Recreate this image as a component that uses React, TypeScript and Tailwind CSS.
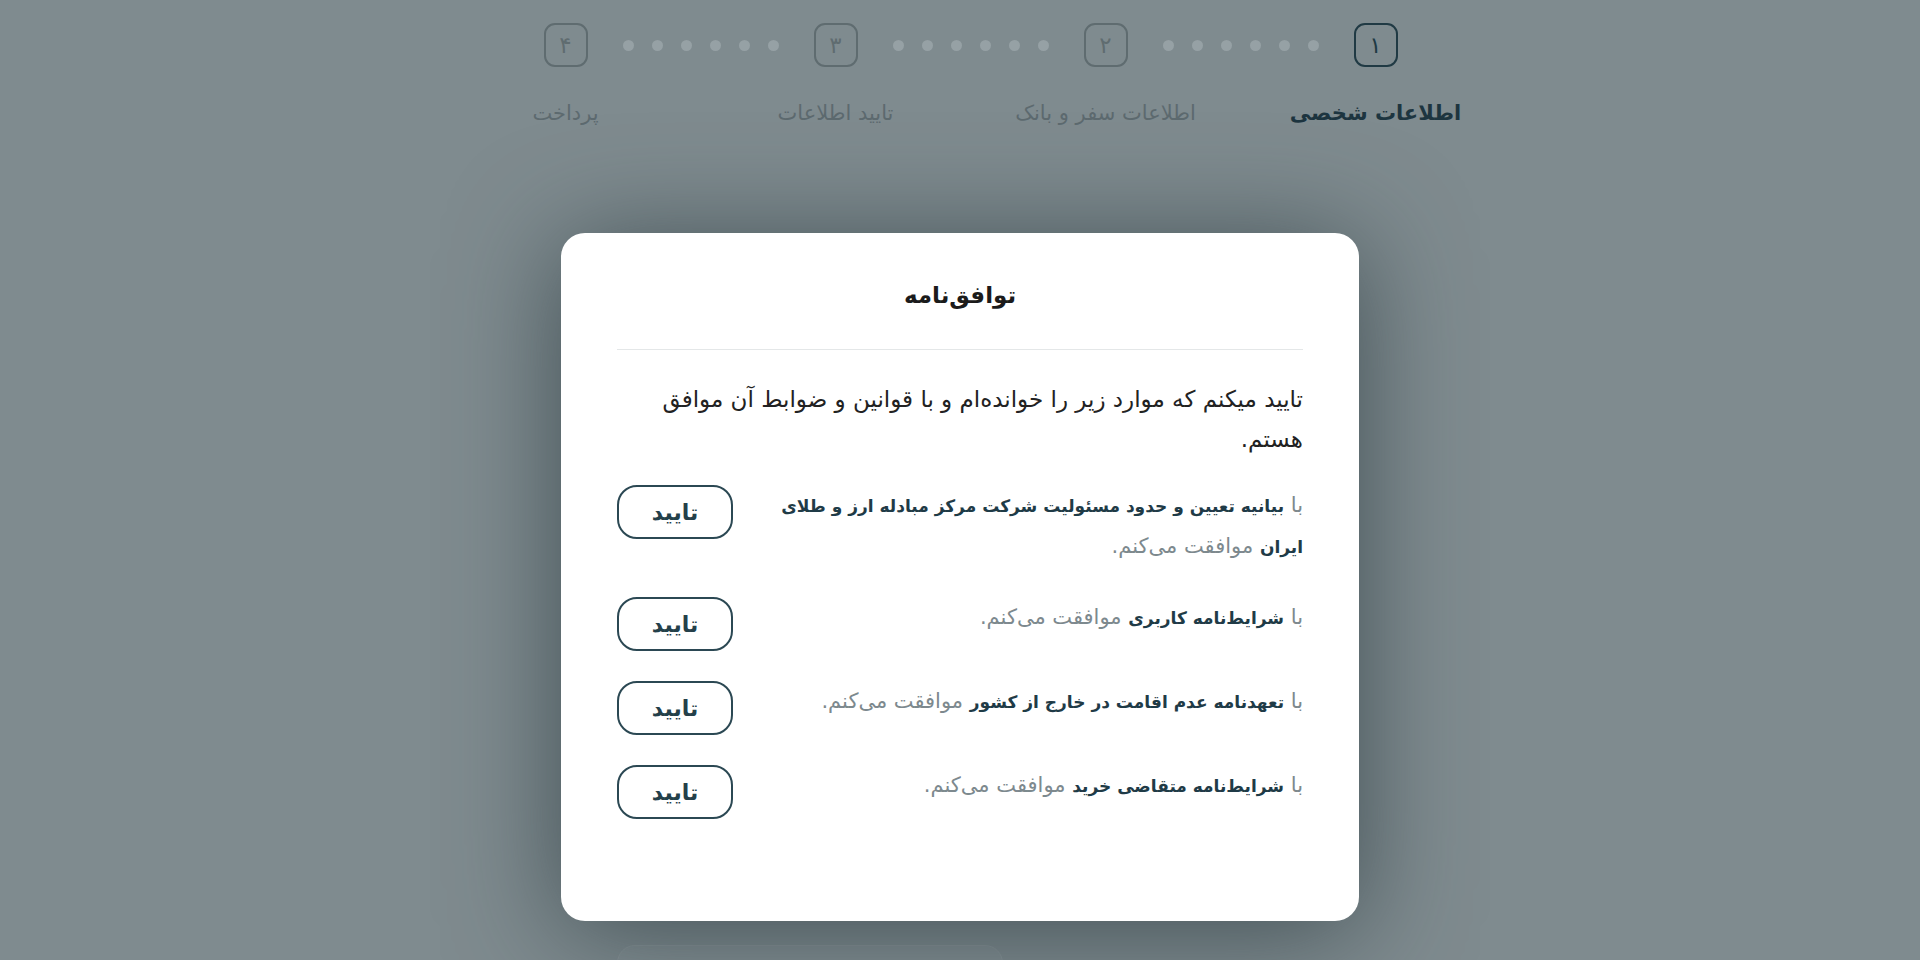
import React from "react";

const steps = [
  { num: "۱", label: "اطلاعات شخصی", active: true },
  { num: "۲", label: "اطلاعات سفر و بانک", active: false },
  { num: "۳", label: "تایید اطلاعات", active: false },
  { num: "۴", label: "پرداخت", active: false },
];

const agreements = [
  { bold: "بیانیه تعیین و حدود مسئولیت شرکت مرکز مبادله ارز و طلای ایران" },
  { bold: "شرایط‌نامه کاربری" },
  { bold: "تعهدنامه عدم اقامت در خارج از کشور" },
  { bold: "شرایط‌نامه متقاضی خرید" },
];

function Dots() {
  return (
    <div className="flex h-[44px] items-center gap-[18px] mx-[35px]">
      {Array.from({ length: 6 }).map((_, i) => (
        <span key={i} className="block h-[11px] w-[11px] rounded-full bg-[#96a1a5]" />
      ))}
    </div>
  );
}

function Stepper() {
  return (
    <div className="flex justify-center pt-[23px] pl-[21px]">
      <div className="flex items-start" dir="rtl">
        {steps.map((s, i) => (
          <React.Fragment key={s.num}>
            <div className="flex w-[44px] flex-col items-center">
              <div
                className={`flex h-[44px] w-[44px] items-center justify-center rounded-[11px] border-2 text-[23px] ${
                  s.active ? "border-[#203a44] text-[#203a44]" : "border-[#5f6c70] text-[#5f6c70]"
                }`}
              >
                {s.num}
              </div>
              <div
                className={`mt-[31px] whitespace-nowrap text-[21px] leading-[30px] ${
                  s.active ? "font-bold text-[#1d3540]" : "text-[#5d6a6f]"
                }`}
              >
                {s.label}
              </div>
            </div>
            {i < steps.length - 1 && <Dots />}
          </React.Fragment>
        ))}
      </div>
    </div>
  );
}

export default function App() {
  return (
    <div
      dir="rtl"
      className="relative h-[960px] w-full overflow-hidden bg-[#7f8b8f] font-['DejaVu_Sans',sans-serif]"
    >
      {/* Page behind the overlay */}
      <Stepper />
      <div className="mx-auto mt-[817px] flex w-[686px] justify-end">
        <div className="h-[60px] w-[386px] rounded-[18px] border border-[#8a9599] bg-[#838f93]" />
      </div>

      {/* Agreement modal */}
      <div className="absolute inset-0 flex justify-center pt-[233px]">
        <div className="h-[688px] w-[798px] rounded-[24px] bg-white px-[56px] pt-[46px] shadow-[0_10px_110px_rgba(45,60,66,0.75)]">
          <h2 className="text-center text-[23px] font-bold leading-[32px] text-[#1b1b1b]">
            توافق‌نامه
          </h2>
          <div className="mt-[38px] h-px bg-[#e4e7e8]" />

          <p className="mt-[29px] text-[23px] leading-[40px] text-[#222]">
            تایید میکنم که موارد زیر را خوانده‌ام و با قوانین و ضوابط آن موافق هستم.
          </p>

          <div className="mt-[26px] flex flex-col gap-[30px]">
            {agreements.map((a) => (
              <div key={a.bold} className="flex items-start justify-between gap-[24px]">
                <p className="flex-1 text-[21px] leading-[41px] text-[#7d898e]">
                  با <span className="text-[17px] font-bold leading-[24px] text-[#1f3b47]">{a.bold}</span>{" "}
                  موافقت می‌کنم.
                </p>
                <button className="flex h-[54px] w-[116px] shrink-0 items-center justify-center rounded-[20px] border-2 border-[#2b4853] text-[22px] font-bold text-[#24404a]">
                  تایید
                </button>
              </div>
            ))}
          </div>
        </div>
      </div>
    </div>
  );
}
